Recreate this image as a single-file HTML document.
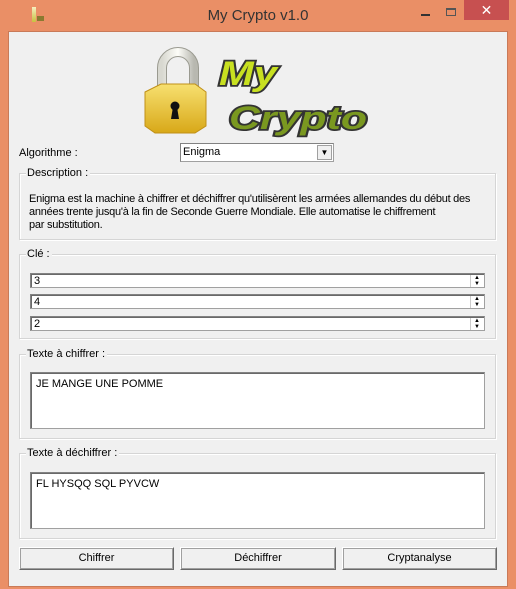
<!DOCTYPE html>
<html><head><meta charset="utf-8"><style>
*{margin:0;padding:0;box-sizing:border-box}
body{width:516px;height:589px;background:#ea8f66;position:relative;overflow:hidden;font-family:"Liberation Sans",sans-serif;font-size:11px;color:#000}
.a{position:absolute}
.client{left:8px;top:31px;width:500px;height:556px;background:#f0f0f0;border:1px solid #c97a58}
.title{left:0;top:7px;width:516px;text-align:center;font-size:15px;color:#333}
.grp{border:1px solid #d5d5d5;box-shadow:inset 1px 1px 0 #fff,1px 1px 0 #fff}
.lbl{background:#f0f0f0;padding:0 2px 0 1px}
.field{background:#fff;border:1px solid #a0a0a0;border-top-color:#828282;border-left-color:#828282;box-shadow:inset 1px 1px 0 #696969}
.btn{background:#f0f0f0;border:1px solid #fff;border-right-color:#696969;border-bottom-color:#696969;box-shadow:1px 1px 0 #a0a0a0 inset,-1px -1px 0 #a0a0a0 inset;text-align:center;line-height:21px}
.spin{right:1px;top:1px;width:13px;height:12px;border-left:1px solid #ccc;font-size:6px;line-height:6px;text-align:center;color:#000}
</style></head><body>
<div class="a" style="left:32px;top:7px;width:4px;height:15px;background:linear-gradient(#f6f0c0,#c8c040)"></div>
<div class="a" style="left:37px;top:16px;width:7px;height:5px;background:#8a7a30"></div>
<div class="a title">My Crypto v1.0</div>
<div class="a" style="left:421px;top:14px;width:9px;height:2px;background:#333"></div>
<div class="a" style="left:446px;top:8px;width:10px;height:8px;border:1px solid #555;border-top-width:2px"></div>
<div class="a" style="left:464px;top:0;width:45px;height:20px;background:#c75050;color:#fff;text-align:center;font-size:14px;line-height:20px">✕</div>
<div class="a client"></div>
<svg class="a" style="left:135px;top:40px" width="240" height="100" viewBox="0 0 240 100">
<defs><linearGradient id="g" x1="0" x2="0" y1="0" y2="1"><stop offset="0" stop-color="#f7e070"/><stop offset="1" stop-color="#d8a818"/></linearGradient>
<linearGradient id="s" x1="0" x2="1"><stop offset="0" stop-color="#d8d8d0"/><stop offset=".5" stop-color="#fdfdf8"/><stop offset="1" stop-color="#b8b8b0"/></linearGradient></defs>
<path d="M27 52 V28 a16 16 0 0 1 32 0 V52" fill="none" stroke="#9a9a90" stroke-width="10"/>
<path d="M27 52 V28 a16 16 0 0 1 32 0 V52" fill="none" stroke="url(#s)" stroke-width="8"/>
<path d="M10 52 L26 44 L60 44 L71 52 V86 L60 93 L20 93 L10 86Z" fill="url(#g)" stroke="#c09018"/>
<circle cx="40" cy="66" r="4.5" fill="#111"/><path d="M38 67 L36 79 H44 L42 67Z" fill="#111"/>
<text x="84" y="45" textLength="58" lengthAdjust="spacingAndGlyphs" font-family="Liberation Sans" font-weight="bold" font-style="italic" font-size="34" fill="#c8e020" stroke="#333" stroke-width="3.5" paint-order="stroke">My</text>
<text x="94" y="89" textLength="138" lengthAdjust="spacingAndGlyphs" font-family="Liberation Sans" font-weight="bold" font-style="italic" font-size="32" fill="#7a9820" stroke="#333" stroke-width="3.5" paint-order="stroke">Crypto</text>
</svg>
<div class="a" style="left:19px;top:147px">Algorithme :</div>
<div class="a field" style="left:180px;top:143px;width:154px;height:19px;padding:2px 2px;box-shadow:none">Enigma</div>
<div class="a" style="left:317px;top:145px;width:15px;height:15px;background:#f0f0f0;border:1px solid #a0a0a0;font-size:8px;text-align:center;line-height:14px">▼</div>
<div class="a grp" style="left:19px;top:173px;width:477px;height:67px"></div>
<div class="a lbl" style="left:26px;top:167px">Description :</div>
<div class="a" style="left:29px;top:193px;width:470px;line-height:13px;white-space:nowrap;letter-spacing:-0.25px">Enigma est la machine à chiffrer et déchiffrer qu'utilisèrent les armées allemandes du début des<br>années trente jusqu'à la fin de Seconde Guerre Mondiale. Elle automatise le chiffrement<br>par substitution.</div>
<div class="a grp" style="left:19px;top:254px;width:477px;height:85px"></div>
<div class="a lbl" style="left:26px;top:248px">Clé :</div>
<div class="a field" style="left:30px;top:273px;width:455px;height:15px;padding:1px 3px">3<div class="a spin">▲<br>▼</div></div>
<div class="a field" style="left:30px;top:294px;width:455px;height:15px;padding:1px 3px">4<div class="a spin">▲<br>▼</div></div>
<div class="a field" style="left:30px;top:316px;width:455px;height:15px;padding:1px 3px">2<div class="a spin">▲<br>▼</div></div>
<div class="a grp" style="left:19px;top:354px;width:477px;height:85px"></div>
<div class="a lbl" style="left:26px;top:348px">Texte à chiffrer :</div>
<div class="a field" style="left:30px;top:372px;width:455px;height:57px;padding:5px 5px">JE MANGE UNE POMME</div>
<div class="a grp" style="left:19px;top:453px;width:477px;height:86px"></div>
<div class="a lbl" style="left:26px;top:447px">Texte à déchiffrer :</div>
<div class="a field" style="left:30px;top:472px;width:455px;height:57px;padding:5px 5px">FL HYSQQ SQL PYVCW</div>
<div class="a btn" style="left:19px;top:547px;width:155px;height:23px">Chiffrer</div>
<div class="a btn" style="left:180px;top:547px;width:156px;height:23px">Déchiffrer</div>
<div class="a btn" style="left:342px;top:547px;width:155px;height:23px">Cryptanalyse</div>
</body></html>
